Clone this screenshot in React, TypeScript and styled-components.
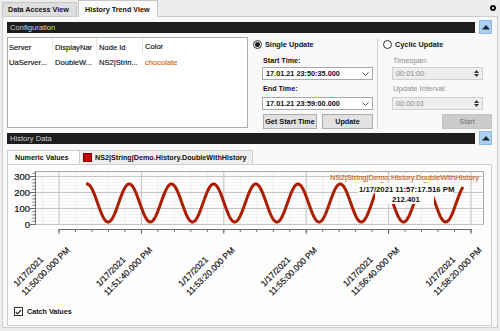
import styled, { createGlobalStyle } from "styled-components";

const GlobalStyle = createGlobalStyle`
  html, body {
    margin: 0;
    padding: 0;
  }
  body {
    font-family: "Liberation Sans", Arial, sans-serif;
    font-size: 7.6px;
    color: #111;
    background: #ececec;
  }
`;

const Root = styled.div`
  width: 500px;
  height: 331px;
  overflow: hidden;
  display: flex;
  flex-direction: column;
  padding: 0 2px;
  box-sizing: border-box;
  background: #ececec;
`;

const TabStrip = styled.div`
  height: 16px;
  flex-shrink: 0;
  display: flex;
  align-items: flex-end;
`;

const TopTab = styled.div<{ $active?: boolean; $width: number }>`
  position: relative;
  z-index: ${({ $active }) => ($active ? 1 : 0)};
  width: ${({ $width }) => $width}px;
  height: ${({ $active }) => ($active ? 17 : 14)}px;
  margin-bottom: ${({ $active }) => ($active ? -1 : 0)}px;
  margin-right: 1px;
  padding-left: ${({ $active }) => ($active ? 6 : 5)}px;
  box-sizing: border-box;
  display: flex;
  align-items: center;
  background: ${({ $active }) => ($active ? "#fafafa" : "#dedede")};
  border: 1px solid #c6c6c6;
  border-bottom: none;
  font-weight: 700;
  font-size: 7.2px;
  white-space: nowrap;
`;

const CloseDot = styled.div`
  width: 6px;
  height: 6px;
  margin-left: auto;
  margin-right: 2px;
  align-self: center;
  border: 2px solid #111;
  border-radius: 50%;
  background: #fff;
  box-sizing: border-box;
`;

const Page = styled.div`
  height: 312px;
  flex-shrink: 0;
  border: 1px solid #cdcdcd;
  background: #f9f9f9;
  padding: 3px 5px 0 4px;
  box-sizing: border-box;
  display: flex;
  flex-direction: column;
`;

const SectionHeader = styled.div`
  height: 14px;
  flex-shrink: 0;
  display: flex;
`;

const HeaderBar = styled.div`
  flex: 1;
  height: 11px;
  margin-top: 2px;
  padding-left: 3px;
  display: flex;
  align-items: center;
  background: #1e1e1e;
  color: #cfcfcf;
  font-size: 7.6px;
`;

const CollapseButton = styled.div`
  width: 13px;
  height: 14px;
  margin-left: 4px;
  box-sizing: border-box;
  display: flex;
  align-items: center;
  justify-content: center;
  background: #add1f3;
  border: 1px solid #8cbbe8;
`;

const ConfigBody = styled.div`
  height: 97px;
  flex-shrink: 0;
  display: flex;
  align-items: flex-start;
`;

const ListBox = styled.div`
  width: 241px;
  height: 91px;
  margin-top: 3px;
  box-sizing: border-box;
  border: 1px solid #adadad;
  background: #fff;
`;

const ListRow = styled.div<{ $header?: boolean }>`
  display: grid;
  grid-template-columns: 45px 44px 46px 1fr;
  height: ${({ $header }) => ($header ? 16 : 12)}px;
  align-items: center;
  margin-bottom: ${({ $header }) => ($header ? 2 : 0)}px;
`;

const Cell = styled.div<{ $first?: boolean; $header?: boolean; $color?: string }>`
  height: 100%;
  display: flex;
  align-items: center;
  padding-left: ${({ $first }) => ($first ? 1 : 2)}px;
  overflow: hidden;
  white-space: nowrap;
  color: ${({ $color }) => $color ?? "#111"};
  border-right: ${({ $header }) => ($header ? "1px solid #e6e6e6" : "none")};
  padding-top: ${({ $header }) => ($header ? 3 : 0)}px;
  box-sizing: border-box;
  -webkit-text-stroke: 0.15px currentColor;
`;

const UpdateColumn = styled.div<{ $gap: number; $grow?: boolean }>`
  margin-left: ${({ $gap }) => $gap}px;
  width: ${({ $grow }) => ($grow ? "auto" : "120px")};
  flex: ${({ $grow }) => ($grow ? 1 : "none")};
  display: flex;
  flex-direction: column;
`;

const RadioRow = styled.div`
  height: 10px;
  margin-top: 5px;
  display: flex;
  align-items: center;
  font-weight: 700;
  font-size: 7.3px;
`;

const Radio = styled.div<{ $checked?: boolean }>`
  width: 9px;
  height: 9px;
  margin-right: 3px;
  box-sizing: border-box;
  border: 1px solid #333;
  border-radius: 50%;
  background: #fff;
  display: flex;
  align-items: center;
  justify-content: center;
  &::after {
    content: "";
    display: ${({ $checked }) => ($checked ? "block" : "none")};
    width: 5px;
    height: 5px;
    border-radius: 50%;
    background: #1a1a1a;
  }
`;

const FieldLabel = styled.div<{ $top: number; $disabled?: boolean }>`
  height: 10px;
  margin-top: ${({ $top }) => $top}px;
  padding-left: 10px;
  display: flex;
  align-items: center;
  font-weight: ${({ $disabled }) => ($disabled ? 400 : 700)};
  font-size: ${({ $disabled }) => ($disabled ? 7.6 : 7.2)}px;
  color: ${({ $disabled }) => ($disabled ? "#8c8c8c" : "#111")};
`;

const InputBox = styled.div<{ $top: number; $width: number; $disabled?: boolean }>`
  height: 13px;
  width: ${({ $width }) => $width}px;
  margin-top: ${({ $top }) => $top}px;
  margin-left: 9px;
  padding: 0 3px 0 3px;
  box-sizing: border-box;
  display: flex;
  align-items: center;
  justify-content: space-between;
  background: ${({ $disabled }) => ($disabled ? "#eeeeee" : "#fff")};
  border: 1px solid ${({ $disabled }) => ($disabled ? "#cfcfcf" : "#a8a8a8")};
  color: ${({ $disabled }) => ($disabled ? "#8a8a8a" : "#111")};
  font-weight: ${({ $disabled }) => ($disabled ? 400 : 700)};
  font-size: 7.3px;
`;

const SpinArrows = styled.div`
  display: flex;
  flex-direction: column;
  gap: 1px;
`;

const ButtonRow = styled.div`
  height: 15px;
  margin-top: 4px;
  margin-left: 10px;
  display: flex;
  gap: 5px;
`;

const PushButton = styled.div<{ $width: number; $disabled?: boolean }>`
  width: ${({ $width }) => $width}px;
  height: 15px;
  box-sizing: border-box;
  display: flex;
  align-items: center;
  justify-content: center;
  background: ${({ $disabled }) => ($disabled ? "#cccccc" : "#e1e1e1")};
  border: 1px solid ${({ $disabled }) => ($disabled ? "#c2c2c2" : "#adadad")};
  color: ${({ $disabled }) => ($disabled ? "#6f6f6f" : "#111")};
  font-weight: ${({ $disabled }) => ($disabled ? 400 : 700)};
  font-size: 7.3px;
  white-space: nowrap;
`;

const StartButton = styled(PushButton)`
  align-self: flex-end;
  margin-top: 4px;
`;

const VSeparator = styled.div`
  width: 1px;
  height: 91px;
  margin-left: 4px;
  margin-top: 4px;
  background: #d2d2d2;
`;

const HistoryBody = styled.div`
  margin-top: 5px;
  display: flex;
  flex-direction: column;
`;

const InnerTabs = styled.div`
  height: 14px;
  display: flex;
`;

const InnerTab = styled.div<{ $active?: boolean; $width: number }>`
  width: ${({ $width }) => $width}px;
  height: 14px;
  box-sizing: border-box;
  padding-left: ${({ $active }) => ($active ? 7 : 3)}px;
  display: flex;
  align-items: center;
  gap: 3px;
  background: ${({ $active }) => ($active ? "#fdfdfd" : "#eeeeee")};
  border: 1px solid #cdcdcd;
  border-bottom: none;
  border-left: ${({ $active }) => ($active ? "1px solid #cdcdcd" : "none")};
  font-weight: 700;
  font-size: 7.2px;
  white-space: nowrap;
`;

const Swatch = styled.div`
  width: 9px;
  height: 9px;
  box-sizing: border-box;
  background: #c80000;
  border: 1px solid #7a0000;
`;

const TabContent = styled.div`
  height: 162px;
  box-sizing: border-box;
  border: 1px solid #cdcdcd;
  background: #fdfdfd;
  display: flex;
  flex-direction: column;
`;

const ChartSvg = styled.svg`
  display: block;
  width: 476px;
  height: 140px;
`;

const CheckRow = styled.div`
  height: 9px;
  margin-top: 2px;
  padding-left: 6px;
  display: flex;
  align-items: center;
  gap: 4px;
  font-weight: 700;
  font-size: 7.2px;
`;

const CheckBox = styled.div`
  width: 9px;
  height: 9px;
  box-sizing: border-box;
  border: 1px solid #333;
  background: #fff;
  display: flex;
  align-items: center;
  justify-content: center;
`;

const Chevron = () => (
  <svg width="7" height="4" viewBox="0 0 7 4">
    <polyline points="0.5,0.5 3.5,3.5 6.5,0.5" fill="none" stroke="#555" strokeWidth="1" />
  </svg>
);

const Spin = () => (
  <SpinArrows>
    <svg width="5" height="3" viewBox="0 0 5 3">
      <polygon points="0,3 2.5,0 5,3" fill="#333" />
    </svg>
    <svg width="5" height="3" viewBox="0 0 5 3">
      <polygon points="0,0 2.5,3 5,0" fill="#333" />
    </svg>
  </SpinArrows>
);

const UpTriangle = () => (
  <svg width="8" height="5" viewBox="0 0 8 5">
    <polygon points="0,4.5 4,0 8,4.5" fill="#1c2833" />
  </svg>
);

// chart geometry in page coordinates (viewBox matches the page)
const PLOT_L = 36;
const PLOT_R = 483;
const PLOT_T = 171;
const Y0 = 224;
const Y_SCALE = 0.16;
const X_MAJOR = Array.from({ length: 6 }, (_, i) => 59 + i * 82.4);
const X_MINOR_STEP = 82.4 / 5;
const CHART_FONT = "Liberation Sans, Arial, sans-serif";

const timeLabels = [
  "11:50:00.000 PM",
  "11:51:40.000 PM",
  "11:53:20.000 PM",
  "11:55:00.000 PM",
  "11:56:40.000 PM",
  "11:58:20.000 PM",
];

const curvePath = (() => {
  const pts: string[] = [];
  for (let x = 86; x <= 463; x += 0.5) {
    const t = Math.max(x, 87);
    const y = 203 - 19 * Math.cos((2 * Math.PI * (t - 87)) / 42.2);
    pts.push(`${x.toFixed(1)},${y.toFixed(2)}`);
  }
  return "M" + pts.join(" L");
})();

const TrendChart = () => {
  const minorX: number[] = [];
  for (let x = 59 - X_MINOR_STEP; x < PLOT_R; x += X_MINOR_STEP) {
    if (x > PLOT_L) minorX.push(x);
  }
  const minorY: number[] = [];
  for (let y = Y0; y > PLOT_T; y -= 3.2) minorY.push(y);
  const axisMinorX: number[] = [];
  for (let x = 59; x <= 471.5; x += X_MINOR_STEP) axisMinorX.push(x);

  return (
    <ChartSvg viewBox="8 165 476 140">
      <rect x={PLOT_L} y={PLOT_T} width={PLOT_R - PLOT_L} height={Y0 - PLOT_T} fill="#fff" />
      {minorX.map((x) => (
        <line key={`mx${x}`} x1={x} x2={x} y1={PLOT_T} y2={Y0} stroke="#ededed" strokeWidth="1" />
      ))}
      {minorY.map((y) => (
        <line key={`my${y}`} x1={PLOT_L} x2={PLOT_R} y1={y} y2={y} stroke="#f1f1f1" strokeWidth="1" />
      ))}
      {[0, 100, 200, 300].map((v) => (
        <line key={`gy${v}`} x1={PLOT_L} x2={PLOT_R} y1={Y0 - v * Y_SCALE + 0.5} y2={Y0 - v * Y_SCALE + 0.5} stroke="#c4c4c4" />
      ))}
      {X_MAJOR.map((x) => (
        <line key={`gx${x}`} x1={x} x2={x} y1={PLOT_T} y2={Y0} stroke="#c4c4c4" />
      ))}
      <line x1={PLOT_L} x2={PLOT_R} y1={PLOT_T + 0.5} y2={PLOT_T + 0.5} stroke="#a9a9a9" />
      <line x1={PLOT_R + 0.5} x2={PLOT_R + 0.5} y1={PLOT_T} y2={Y0 + 1} stroke="#a9a9a9" />

      {/* y axis */}
      <line x1={PLOT_L - 0.5} x2={PLOT_L - 0.5} y1={PLOT_T} y2={Y0 + 1} stroke="#6e6e6e" />
      {minorY.map((y) => (
        <line key={`ty${y}`} x1={32.5} x2={PLOT_L} y1={y + 0.5} y2={y + 0.5} stroke="#6e6e6e" />
      ))}
      {[0, 100, 200, 300].map((v) => (
        <g key={`ly${v}`}>
          <line x1={30} x2={PLOT_L} y1={Y0 - v * Y_SCALE + 0.5} y2={Y0 - v * Y_SCALE + 0.5} stroke="#6e6e6e" />
          <text x={30} y={Y0 - v * Y_SCALE + 3.5} textAnchor="end" fontSize="9.5" fill="#111" fontFamily={CHART_FONT} stroke="#111" strokeWidth="0.2">
            {v}
          </text>
        </g>
      ))}

      {/* x axis */}
      <line x1={59} x2={471.5} y1={229.5} y2={229.5} stroke="#6e6e6e" />
      {axisMinorX.map((x) => (
        <line key={`tx${x}`} x1={x} x2={x} y1={229} y2={232} stroke="#6e6e6e" />
      ))}
      {X_MAJOR.map((x) => (
        <line key={`tX${x}`} x1={x} x2={x} y1={229} y2={234} stroke="#6e6e6e" />
      ))}
      {X_MAJOR.map((x, i) => (
        <g key={`lx${x}`} fontSize="8.5" fill="#111" fontFamily={CHART_FONT} stroke="#111" strokeWidth="0.2">
          <text transform={`translate(${x - 42} 287) rotate(-45)`}>1/17/2021</text>
          <text transform={`translate(${x - 34} 296) rotate(-45)`}>{timeLabels[i]}</text>
        </g>
      ))}

      {/* series */}
      <path d={curvePath} fill="none" stroke="#ad1d00" strokeWidth="3" strokeLinejoin="round" />

      {/* hover label */}
      <rect x={358} y={183} width={95} height={10} fill="#fdfdfd" />
      <rect x={375} y={193} width={59} height={11} fill="#fdfdfd" />
      <g fontSize="7.7" fontWeight="700" fill="#111" fontFamily={CHART_FONT}>
        <text x={359} y={192}>1/17/2021 11:57:17.516 PM</text>
        <text x={392} y={201.5}>212.401</text>
      </g>

      <text x={330} y={179.5} fontSize="7.6" fill="#cd661f" fontFamily={CHART_FONT} stroke="#cd661f" strokeWidth="0.15">
        NS2|String|Demo.History.DoubleWithHistory
      </text>
    </ChartSvg>
  );
};

export default function App() {
  return (
    <>
      <GlobalStyle />
      <Root>
        <TabStrip>
          <TopTab $width={75}>Data Access View</TopTab>
          <TopTab $active $width={80}>History Trend View</TopTab>
          <CloseDot />
        </TabStrip>
        <Page>
          <SectionHeader>
            <HeaderBar>Configuration</HeaderBar>
            <CollapseButton>
              <UpTriangle />
            </CollapseButton>
          </SectionHeader>
          <ConfigBody>
            <ListBox>
              <ListRow $header>
                <Cell $header $first>Server</Cell>
                <Cell $header>DisplayNar</Cell>
                <Cell $header>Node Id</Cell>
                <Cell>Color</Cell>
              </ListRow>
              <ListRow>
                <Cell $first>UaServer...</Cell>
                <Cell>DoubleW...</Cell>
                <Cell>NS2|Strin...</Cell>
                <Cell $color="#d2691e">chocolate</Cell>
              </ListRow>
            </ListBox>
            <UpdateColumn $gap={5}>
              <RadioRow>
                <Radio $checked />
                Single Update
              </RadioRow>
              <FieldLabel $top={6}>Start Time:</FieldLabel>
              <InputBox $top={2} $width={111}>
                17.01.21 23:50:35.000
                <Chevron />
              </InputBox>
              <FieldLabel $top={3}>End Time:</FieldLabel>
              <InputBox $top={4} $width={111}>
                17.01.21 23:59:00.000
                <Chevron />
              </InputBox>
              <ButtonRow>
                <PushButton $width={54}>Get Start Time</PushButton>
                <PushButton $width={51}>Update</PushButton>
              </ButtonRow>
            </UpdateColumn>
            <VSeparator />
            <UpdateColumn $gap={5} $grow>
              <RadioRow>
                <Radio />
                Cyclic Update
              </RadioRow>
              <FieldLabel $top={6} $disabled>Timespan:</FieldLabel>
              <InputBox $top={2} $width={91} $disabled>
                00:01:00
                <Spin />
              </InputBox>
              <FieldLabel $top={3} $disabled>Update Interval:</FieldLabel>
              <InputBox $top={4} $width={91} $disabled>
                00:00:01
                <Spin />
              </InputBox>
              <StartButton $width={50} $disabled>Start</StartButton>
            </UpdateColumn>
          </ConfigBody>
          <SectionHeader>
            <HeaderBar>History Data</HeaderBar>
            <CollapseButton>
              <UpTriangle />
            </CollapseButton>
          </SectionHeader>
          <HistoryBody>
            <InnerTabs>
              <InnerTab $active $width={73}>Numeric Values</InnerTab>
              <InnerTab $width={173}>
                <Swatch />
                NS2|String|Demo.History.DoubleWithHistory
              </InnerTab>
            </InnerTabs>
            <TabContent>
              <TrendChart />
              <CheckRow>
                <CheckBox>
                  <svg width="7" height="6" viewBox="0 0 7 6">
                    <polyline points="0.8,3 2.6,4.8 6.2,0.8" fill="none" stroke="#222" strokeWidth="1.2" />
                  </svg>
                </CheckBox>
                Catch Values
              </CheckRow>
            </TabContent>
          </HistoryBody>
        </Page>
      </Root>
    </>
  );
}
